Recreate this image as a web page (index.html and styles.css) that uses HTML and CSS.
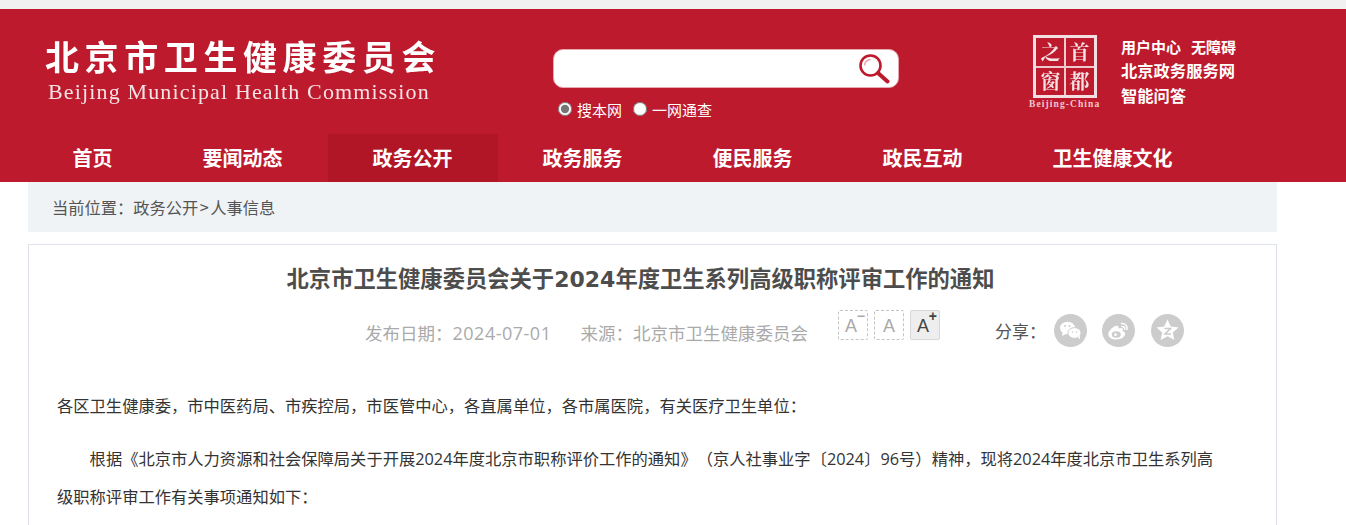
FILE: index.html
```html
<!DOCTYPE html>
<html lang="zh">
<head>
<meta charset="utf-8">
<title>北京市卫生健康委员会</title>
<link rel="stylesheet" href="styles.css">
</head>
<body>
<header class="masthead">
  <div class="top">
    <a class="logo">
      <span class="logo-cn">北京市卫生健康委员会</span>
      <span class="logo-en">Beijing Municipal Health Commission</span>
    </a>
    <div class="search">
      <div class="search-box">
        <svg class="search-icon" viewBox="0 0 32 32" width="32" height="32">
          <circle cx="12.5" cy="12.5" r="10" fill="none" stroke="#bd1a2d" stroke-width="2.6"/>
          <path d="M6.5 12.5a6 6 0 0 1 6-6" fill="none" stroke="#e8a0a8" stroke-width="1.4"/>
          <path d="M20 20l9.5 8.5" stroke="#bd1a2d" stroke-width="4" stroke-linecap="round"/>
        </svg>
      </div>
      <div class="scopes">
        <label class="scope"><input type="radio" name="scope" class="scope-radio" checked>搜本网</label>
        <label class="scope"><input type="radio" name="scope" class="scope-radio">一网通查</label>
      </div>
    </div>
    <div class="seal-wrap">
      <div class="seal">
        <span class="seal-ch">之</span><span class="seal-ch">首</span>
        <span class="seal-ch">窗</span><span class="seal-ch">都</span>
      </div>
      <div class="seal-en">Beijing-China</div>
    </div>
    <div class="links">
      <div class="links-small"><a>用户中心</a><a>无障碍</a></div>
      <a class="links-big">北京政务服务网</a>
      <a class="links-big">智能问答</a>
    </div>
  </div>
  <nav class="nav">
    <a class="nav-item">首页</a>
    <a class="nav-item">要闻动态</a>
    <a class="nav-item active">政务公开</a>
    <a class="nav-item">政务服务</a>
    <a class="nav-item">便民服务</a>
    <a class="nav-item">政民互动</a>
    <a class="nav-item">卫生健康文化</a>
  </nav>
</header>
<main class="wrap">
  <div class="crumb">当前位置：政务公开<span class="crumb-sep">&gt;</span>人事信息</div>
  <article class="article">
    <h1 class="title">北京市卫生健康委员会关于<span class="title-num">2024</span>年度卫生系列高级职称评审工作的通知</h1>
    <div class="meta">
      <span class="meta-date">发布日期：<span class="meta-num">2024-07-01</span></span>
      <span class="meta-src">来源：北京市卫生健康委员会</span>
      <div class="sizes">
        <span class="size minus">A<i class="size-mark">−</i></span>
        <span class="size">A</span>
        <span class="size on">A<i class="size-mark">+</i></span>
      </div>
      <div class="share">
        <span class="share-label">分享：</span>
        <span class="share-btn">
          <svg viewBox="0 0 33 33" width="33" height="33">
            <ellipse cx="13.5" cy="14" rx="7.5" ry="6.3" fill="#fff"/>
            <path d="M9 18l-1 4 4-2z" fill="#fff"/>
            <ellipse cx="20.5" cy="19" rx="6.6" ry="5.4" fill="#fff" stroke="#ccc" stroke-width="1"/>
            <path d="M24 23l2 2.5-.2-4z" fill="#fff"/>
            <circle cx="11" cy="12" r="1" fill="#ccc"/><circle cx="15.5" cy="12" r="1" fill="#ccc"/>
            <circle cx="18.5" cy="18" r=".8" fill="#ccc"/><circle cx="22.5" cy="18" r=".8" fill="#ccc"/>
          </svg>
        </span>
        <span class="share-btn">
          <svg viewBox="0 0 33 33" width="33" height="33">
            <path d="M14.5 25.5c-4.8 0-8.2-2.3-8.2-5.3 0-3.4 4.8-7.9 8.4-8.4 1.6-.2 2.2 1 1.7 2.8 2.3-.9 4.5-.8 4.5 1 0 .5-.2 1-.4 1.4 1.6.4 2.6 1.300 2.600 2.800 0 3-3.800 5.700-8.600 5.700z" fill="#fff"/>
            <ellipse cx="14.300" cy="20.500" rx="4.500" ry="3.200" fill="#ccc"/>
            <circle cx="13.500" cy="20.700" r="1.400" fill="#fff"/>
            <path d="M19.500 9.500c3.500-.6 6.300 2.300 5.500 6M20 12.500c1.800-.3 3 1 2.700 2.800" fill="none" stroke="#fff" stroke-width="1.500" stroke-linecap="round"/>
          </svg>
        </span>
        <span class="share-btn">
          <svg viewBox="0 0 33 33" width="33" height="33">
            <path d="M16.500 5.500l3.300 7 7.700.9-5.700 5.100 1.600 7.600-6.900-3.900-6.900 3.900 1.600-7.600-5.700-5.100 7.700-.9z" fill="#fff"/>
            <path d="M13.500 14.500h6l-5.500 5.500h6" fill="none" stroke="#ccc" stroke-width="1.600"/>
          </svg>
        </span>
      </div>
    </div>
    <p class="lead">各区卫生健康委，市中医药局、市疾控局，市医管中心，各直属单位，各市属医院，有关医疗卫生单位：</p>
    <p class="para">根据《北京市人力资源和社会保障局关于开展2024年度北京市职称评价工作的通知》（京人社事业字〔2024〕96号）精神，现将2024年度北京市卫生系列高级职称评审工作有关事项通知如下：</p>
  </article>
</main>
</body>
</html>
```
FILE: styles.css
```css
* { box-sizing: border-box; }
html, body { height: 525px; overflow: hidden; }
body {
  margin: 0;
  background: #fff;
  font-family: "Noto Sans CJK SC", "Liberation Sans", sans-serif;
  color: #444;
  text-spacing-trim: space-all;
}
.masthead {
  margin-top: 9px;
  background: #bd1a2d;
  box-shadow: 0 -9px 0 #f1f1f1;
  color: #fff;
}
.top { display: flex; height: 125px; }
.logo {
  display: flex;
  flex-direction: column;
  width: 509px;
  margin-left: 45px;
  padding-top: 27px;
  filter: blur(.3px);
}
.logo-cn {
  font-size: 34px;
  font-weight: 700;
  line-height: 40px;
  letter-spacing: 5.6px;
  white-space: nowrap;
}
.logo-en {
  margin-left: 3px;
  margin-top: 4px;
  font-family: "Liberation Serif", serif;
  font-size: 22px;
  line-height: 24px;
  letter-spacing: 1.15px;
  color: #f6e3e5;
  white-space: nowrap;
}
.search { width: 479px; padding-top: 40px; }
.search-box {
  display: flex;
  justify-content: flex-end;
  align-items: center;
  width: 346px;
  height: 39px;
  margin-left: -1px;
  padding-right: 8px;
  background: #fff;
  border-radius: 10px;
  border: 1px solid #e5a9b0;
}
.scopes { display: flex; gap: 11px; margin-top: 10px; padding-left: 4px; }
.scope {
  display: flex;
  align-items: flex-start;
  font-size: 15px;
  line-height: 23px;
  height: 27px;
}
.scope-radio {
  width: 14px;
  height: 14px;
  margin: 4px 5px 0 0;
  accent-color: #757575;
}
.seal-wrap { width: 88px; padding-top: 26px; flex: none; }
.seal {
  display: grid;
  grid-template-columns: 1fr 1fr;
  width: 64px;
  height: 63px;
  border: 3px solid #f3dfe1;
  background:
    linear-gradient(#eec9cd, #eec9cd) center / 100% 2px no-repeat,
    linear-gradient(#eec9cd, #eec9cd) center / 2px 100% no-repeat;
  filter: blur(.3px);
}
.seal-ch {
  display: flex;
  align-items: center;
  justify-content: center;
  font-family: "Noto Serif CJK SC", "Noto Sans CJK SC", sans-serif;
  font-size: 20px;
  font-weight: 700;
  line-height: 1;
  color: #f6e3e5;
}
.seal-en {
  width: 72px;
  margin: 0 0 0 -4px;
  font-family: "Liberation Serif", serif;
  font-size: 9.500px;
  font-weight: 700;
  line-height: 12px;
  letter-spacing: 1.1px;
  color: #eec9cd;
  white-space: nowrap;
}
.links {
  display: flex;
  flex-direction: column;
  padding-top: 27px;
  font-weight: 700;
}
.links-small { display: flex; gap: 10px; font-size: 15px; line-height: 22px; }
.links-big { font-size: 16.300px; line-height: 25px; }
.nav { display: flex; height: 48px; padding-left: 28px; }
.nav-item {
  padding: 0 45.500px 0 44.500px;
  font-size: 20px;
  font-weight: 700;
  line-height: 48px;
}
.nav-item.active { background: #b11626; }
.wrap { width: 1249px; margin-left: 28px; }
.crumb {
  height: 50px;
  padding-left: 24px;
  background: #eff3f6;
  font-size: 16.250px;
  line-height: 50px;
  color: #555;
}
.crumb-sep { margin: 0 1.500px; }
.article {
  height: 400px;
  margin-top: 12px;
  padding: 0 28px;
  border: 1px solid #dde3e8;
}
.title {
  margin: 14px 0 0;
  padding-right: 24px;
  font-size: 22.300px;
  font-weight: 700;
  line-height: 36px;
  text-align: center;
  color: #4d4d4d;
  white-space: nowrap;
}
.title-num { font-family: "DejaVu Sans", sans-serif; font-size: 22px; }
.meta {
  display: flex;
  align-items: flex-start;
  height: 50px;
  margin-top: 12px;
  padding-left: 308px;
  white-space: nowrap;
}
.meta-date, .meta-src {
  font-size: 17.500px;
  line-height: 26px;
  margin-top: 10px;
  color: #aaa;
}
.meta-num { font-family: "Open Sans", sans-serif; font-size: 18px; letter-spacing: .5px; }
.meta-src { margin-left: 29px; }
.sizes { display: flex; gap: 6px; margin-left: 30px; }
.size {
  position: relative;
  width: 30px;
  height: 30px;
  border: 1px dashed #c4c4c4;
  border-radius: 2px;
  font-family: "Liberation Sans", sans-serif;
  font-size: 18px;
  line-height: 30px;
  text-align: center;
  color: #aaa;
}
.size.minus, .size.on { padding-right: 4px; }
.size.on {
  border: 1px solid #d8d8d8;
  background: #eee;
  color: #444;
}
.size-mark {
  position: absolute;
  top: -3px;
  right: 2px;
  font-size: 14px;
  font-style: normal;
  font-weight: 700;
  line-height: 16px;
}
.share { display: flex; align-items: center; margin: 4px 0 0 55px; }
.share-label { width: 59px; font-size: 17px; line-height: 33px; color: #555; }
.share-btn {
  display: block;
  width: 33px;
  height: 33px;
  margin-right: 15.500px;
  border-radius: 50%;
  background: #ccc;
}
.lead, .para {
  margin: 0;
  font-family: "Open Sans", "Noto Sans CJK SC", sans-serif;
  font-size: 16.300px;
  line-height: 38px;
  color: #333;
}
.lead { margin-top: 27px; }
.para { margin-top: 15px; margin-right: 25px; text-indent: 2em; }
```
